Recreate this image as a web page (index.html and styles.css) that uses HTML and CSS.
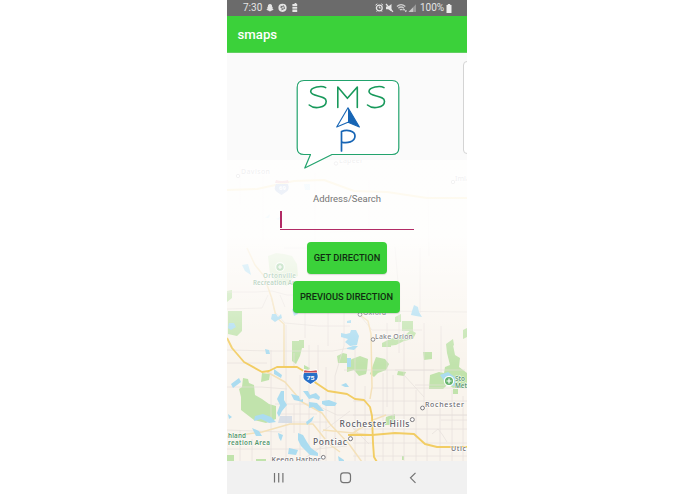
FILE: index.html
```html
<!DOCTYPE html>
<html lang="en">
<head>
<meta charset="utf-8">
<title>smaps</title>
<link rel="stylesheet" href="styles.css">
</head>
<body>
<div class="phone">
  <header class="status">
    <span class="time">7:30</span>
    <svg class="status-left" width="34" height="10" viewBox="0 0 34 10">
      <path fill="#e6e6e6" d="M4 1c1.500 0 2.200 1 2.100 2.700l.9.5-.8.8 1.400 1.800-1.700.6L4 8.600l-1.900-1.200-1.700-.6L1.800 5 1 4.200l.9-.5C1.800 2 2.500 1 4 1z"/>
      <circle cx="16.500" cy="4.800" r="4.100" fill="#e6e6e6"/>
      <path fill="none" stroke="#6b6b6b" stroke-width=".9" d="M14.300 4.300l3.400-1.500M15.400 6.800l3.400-1.500M15.100 2.800l1.300 3.500M17.600 2.700l.9 2.700"/>
      <path fill="#e6e6e6" d="M27.800 1h.8V0h1.800v1h.8v2.300h-4.800V1zM26.400 4h4.800v1.800h-4.800zM26.400 6.400h4.800V9h-4.800z"/>
    </svg>
    <svg class="status-right" width="42" height="10" viewBox="0 0 42 10">
      <g fill="none" stroke="#e6e6e6">
        <circle cx="4.300" cy="5" r="2.900" stroke-width="1.300"/>
        <path d="M.5 2.200L2.300.8M6.300.8l1.800 1.400M4.300 3.400V5h1.400M1.600 8.600l.9-.9M7 8.600l-.9-.9"/>
        <path d="M11 1l7 7.800" stroke-width="1.200"/>
        <path d="M22 3.400q4-3.600 8.300 0M23.400 5.200q2.700-2.400 5.500 0M24.900 6.900q1.300-1.100 2.600 0" stroke-width="1.300" stroke="#d0d0d0"/>
      </g>
      <path fill="#e6e6e6" d="M11 3.500h2.300L16.500 1v7.600l-3.200-2.400H11zM29 5.500l1.300 1.700h-2.600zM30.800 9.200l-1.300-1.700h2.600z"/>
      <path fill="#999" d="M33.500 9L41 1.300V9z"/><path fill="#c5c5c5" d="M33.500 9L38 4.400V9z"/>
    </svg>
    <span class="percent">100%</span>
    <svg class="battery" width="6" height="9" viewBox="0 0 6 9"><path fill="#eee" d="M1.800 0h2.400v1H5.500v8H.5V1h1.300z"/></svg>
  </header>
  <div class="appbar">smaps</div>

  <main class="content">
    <svg class="map" viewBox="227 160 240 302" width="240" height="302">
      <defs>
        <linearGradient id="fade" gradientUnits="userSpaceOnUse" x1="0" y1="160" x2="0" y2="365">
          <stop offset="0" stop-color="#fff" stop-opacity=".9"/>
          <stop offset=".37" stop-color="#fff" stop-opacity=".9"/>
          <stop offset=".46" stop-color="#fff" stop-opacity=".72"/>
          <stop offset=".72" stop-color="#fff" stop-opacity=".36"/>
          <stop offset="1" stop-color="#fff" stop-opacity="0"/>
        </linearGradient>
      </defs>
      <rect x="227" y="160" width="240" height="302" fill="#f9f4ed"/>
      <g class="park">
        <path d="M227 291l5-1v8l-5 4zM228 311h14v20l-5 5-9-2z"/>
        <path opacity=".55" d="M268 256l8-3 8 1 8 2 5 8 1 12-5 2-6 8-10-3-7-9z"/>
        <path d="M292 346v-5h7v-1h5v8h-2l-2 8-4 8-4-3zM243 378l5 1 1 4 5 2 1 10 7 4 7 5 7 2v13l-10 4-12-3-13-10v-13l-2-8 3-2zM262 373l8 1-1 6-8 2zM304 365l6 3-2 3-4-1zM337 356l6-3 4 1v9l-9 0z"/>
        <path d="M402 321h11v10h-11zM382 343l8-4 7-2 8-2 6-5 5 3-3 6-9 2-8 4-9 1-5 1zM395 317l6-3v8h-6zM446 344l7-5 1 6-5 5 3 4-5-1zM463 330l4-2v9l-4 2z"/>
        <path d="M352 359l8-3 8 3-1 11-1 4-7 2-5-6-7 2v-10zM376 357l9 2 4 5-3 6-8 3-4 4-4-3 3-9zM382 345h9v2h-9zM398 371l8 1-2 4-7-1zM423 352h9v7l-8 1zM447 345h6l2 10 5 3-1 9 8 6v15h-14l-5-4-5 5h-14l1-14 9-3 5 1 1-6 5-2-3-12zM453 389h5v5h-5zM386 417l9-3v7l-6 4h-4zM256 459h10v3h-10z"/>
        <path d="M227 455h7v7h-7zM402 456h2v4h-2z"/>
      </g>
      <g class="roads">
        <path d="M227 292h29l16-1 15 4h58l31 16 91 1M227 309l35-1 6-13M271 298l4 14 10 11 33 3h32M305 307v31M328 307v39M271 350v112M286 325v137M300 375v87M344 312v34l-9 30v86M395 247l4 47v59M420 248v65M357 312l15 18h50M424 323v86M441 326v47M404 330v132M387 323v84M227 350l45 1h61l16-3M227 387h34l26 2M227 430l55 2M275 404h39l23 11h130M309 345v117M326 367v95M355 345v117M372 388h95M353 401h114M415 385h52M353 415h114M353 429h114M353 443h114M353 456h114M365 386v76M383 373v89M393 375v87M416 390v72M427 404v58M440 405v57M452 390v72M463 396v66M280 414h37M282 422h48M294 405v28M320 405v57M226 449h90l31-3M240 430v31M252 439v23"/>
        <path d="M404 375l20 22M395 370h70M344 370h90M227 363h40M294 353v14M318 345v30M345 420l24 24M322 432l28-21M305 458l31-21M432 434l6-5 4 5 5 8M441 420h26M263 176v64M315 173v68M369 180v49M428 190l1 66M240 166v38M330 232l40-1M284 248h60M280 295l5 12"/>
      </g>
      <path class="minor" d="M247 248l8 17 9 11 8 23 4 18 8 7v42M360 315l8 6 3 13 1 53-2 12M267 372l18 10 17 20 20 11 8 11 19 20 13 18M227 437l35-5 28-8 23 0 16 20 11 8M350 435l23-15 13-5M323 430l50 5"/>
      <path class="highway" d="M227 190l30-1 37-8 30-1 30 11 33 1 40 6h40"/>
      <path class="highway" d="M227 338l5 10 12 14 18 10 7-1 8-4 20 0 10 6 9 10 12 8 19 3 8 5 9 1 6 7 2 9 1 27 1 14 3 5 13 5 19 1"/>
      <path class="highway" d="M348 435l24 0 23-2 19 1 11 10 12 3h30"/>
      <g class="lake">
        <path d="M242 265l6-1 2 7 1 4-6-4zM272 314l4 0 2 3 3-3 1 4-4 2-3 2-4-3zM229 323h5l2 4-5 3-3-2zM265 349l4 1 1 4-4 0zM274 369l8 6-1 3-7-4zM235 381l4-3 2 4-8 6-2-4zM291 394l8 2 1 4 3-1v3l-9-2zM281 391h3v9l3 5-5 6-3 6-2-4 3-8-3-6zM255 416l8-2 8 3 5 5-7 1-8-4-7 2zM303 391l5 0 2 4 6-2 4 4-1 3-6-2-4 1zM309 402l8 1 7 8-5 0-6-4-4 1zM322 401l7-1 8 3-2 3-9 0-4-2zM306 422l8-6-2 5-5 4zM298 433l5 2 4 7 4 6 7 5v3l-8-1-9-9-3-6zM252 428l7 3 3 5-6 0zM289 448l9 2-2 5-8-1zM278 433l5 2-2 6-2-3z"/>
        <path d="M292 309l3-1 3 6-4 2zM412 311l2-6 4 2 1 5 3 5-6-1-5-1zM347 321l4-1v3l-4 0zM341 333l5 1 4-1 1-3 5 0 3 6-2 9-7 1-5-4 3-3-7-2zM347 348l6-2 5 0-4 4-7-1zM347 358h4v9h-4zM440 375l8-3 8 6-1 8-8-1zM228 414l4 3-3 2zM338 456l6 4v2h-5zM284 215l-5 5-3-1zM304 184h6v6h-5zM265 218l5-4-1 4zM341 385l5-2 3 4-4 0z"/>
      </g>
      <path fill="#d1d9e5" opacity=".8" d="M280 416h12v7h-14z"/>
      <g class="poi faint"><circle cx="280" cy="267" r="4.300"/><path d="M280 265v4M278 267h4"/></g>
      <g class="poi"><circle cx="449" cy="381" r="4.600"/><path d="M449 378.500v5M446.500 381h5"/></g>
      <g class="shield"><path fill="#fff" d="M304 369q7 2 13 0 4 9-1 12l-5.500 4-5.500-4q-5-4-1-12z"/><path fill="#286fc7" d="M304 373h13q2 6-2 8l-4.500 3-4.500-3q-4-3-2-8z"/><path fill="#c94c55" d="M304.500 370.200q6 1.500 12 0l.7 2.200h-13.400z"/><text x="306.500" y="380" textLength="8" lengthAdjust="spacingAndGlyphs">75</text></g>
      <g class="shield"><path fill="#507abf" d="M276 184h12q2 6-2 8l-4.500 3-4.500-3q-4-3-1-8z"/><path fill="#d45b65" d="M276 180q6 2 12 0l1 3h-14z"/><text x="279" y="190">69</text></g>
      <g class="place">
        <text x="241" y="174" textLength="29">Davison</text><text x="339" y="163" textLength="24">Lapeer</text><text x="455" y="181">Imla</text>
        <text x="363" y="314.500" textLength="23">Oxford</text>
        <text x="375" y="338.500" textLength="38">Lake Orion</text>
        <text x="425" y="407" textLength="39">Rochester</text>
        <text x="451" y="451" textLength="15">Utic</text>
        <text x="271.500" y="462" textLength="49">Keego Harbor</text>
      </g>
      <g class="place big"><text x="339.500" y="426.500" textLength="70">Rochester Hills</text><text x="313" y="445" textLength="34">Pontiac</text></g>
      <g class="green">
        <text class="faint" x="263" y="278" textLength="33">Ortonville</text><text class="faint" x="253" y="285" textLength="49">Recreation Area</text>
        <text x="228" y="438" textLength="18">hland</text><text x="228" y="445" textLength="42">reation Area</text>
        <text x="455" y="380.500">Sto</text><text x="455" y="387.500">Met</text>
      </g>
      <g class="dots"><circle cx="238" cy="176" r="1.700"/><circle cx="336" cy="163.500" r="1.700"/><circle cx="453" cy="182" r="1.700"/><circle cx="360" cy="314.500" r="1.900"/><circle cx="373" cy="339.500" r="1.800"/><circle cx="422.500" cy="408" r="1.900"/><circle cx="412.300" cy="419.600" r="2"/><circle cx="350.500" cy="438.700" r="2"/><circle cx="323.300" cy="457.300" r="1.900"/></g>
      <rect x="227" y="160" width="240" height="205" fill="url(#fade)"/>
    </svg>
    <div class="side-card"></div>
    <svg class="logo" viewBox="290 75 116 97" width="116" height="97" fill="none" stroke-linecap="round" stroke-linejoin="round">
      <path fill="#fff" stroke="#22a36d" stroke-width="1.200" d="M304 80.500h88q6.800 0 6.800 7V148q0 6.500-6.800 6.500h-60L304.800 168l5.700-13.500H304q-6.800 0-6.800-6.500V87.500q0-7 6.800-7z"/>
      <g stroke="#18995b" stroke-width="1.600">
        <path d="M325.700 87.600c-4-2.400-15-.6-15 4 0 5.800 15.500 3 15.500 9.600 0 6.800-12 8.200-17 3.800"/>
        <path d="M337.800 107.500V87l9.600 11.300L357.300 87v20.500"/>
        <path d="M384 87.600c-4-2.400-15-.6-15 4 0 5.800 15.500 3 15.500 9.600 0 6.800-12 8.200-17 3.800"/>
      </g>
      <path fill="#fff" stroke="#1765b5" stroke-width="1.100" d="M348 107.800L336.700 127l11.300-4.800 11.400 4.800z"/>
      <path fill="#1765b5" d="M348 107.800v14.400l11.400 4.800z"/>
      <path stroke="#1765b5" stroke-width="1.700" d="M341.500 151v-19.500c5-2 13.500-1.200 13.500 4.600 0 6-8 7.400-13.500 6"/>
    </svg>
    <label class="label" for="address">Address/Search</label>
    <div class="field" id="address"></div>
    <button class="btn get">GET DIRECTION</button>
    <button class="btn previous">PREVIOUS DIRECTION</button>
  </main>

  <nav class="nav">
    <svg width="240" height="33" viewBox="0 0 240 33" fill="none" stroke="#737373" stroke-width="1.200">
      <path d="M47.500 12v9.500M51.700 12v9.500M55.900 12v9.500"/>
      <rect x="113.700" y="11.800" width="9.800" height="9.800" rx="2.800"/>
      <path d="M188.500 11.800l-5 5 5 5"/>
    </svg>
  </nav>
</div>
</body>
</html>
```
FILE: styles.css
```css
* { box-sizing: border-box; }
body { margin: 0; background: #fff; font-family: Roboto, sans-serif; }
.phone { display: flex; flex-direction: column; width: 240px; height: 494px; margin-left: 227px; overflow: hidden; background: #fafafa; }
.status { display: flex; align-items: center; height: 16px; flex: none; padding: 0 15px 0 16px; background: #6b6b6b; color: #e4e4e4; font-size: 10px; line-height: 16px; }
.time { width: 20px; }
.status-left { margin-left: 3px; }
.status-right { margin-left: auto; margin-right: 3px; }
.percent { width: 24px; margin-right: 2px; white-space: nowrap; }
.appbar { height: 37px; flex: none; padding: 0 10.5px; background: #3bd13a; color: #fff; font-size: 13.2px; font-weight: 500; line-height: 38px; border-bottom: 1px solid #62cf62; }
.content { position: relative; display: flex; flex-direction: column; align-items: center; height: 408px; flex: none; overflow: hidden; }
.map { position: absolute; top: 107px; left: 0; }
.side-card { position: absolute; top: 8px; right: -6px; width: 10px; height: 93px; border: 1px solid #d4d4d4; border-radius: 4px; background: #fff; }
.logo { position: relative; flex: none; margin-top: 22px; margin-left: 2px; }
.label { position: relative; margin-top: 20px; color: #757575; font-size: 9.5px; line-height: 14px; }
.field { position: relative; flex: none; width: 134px; height: 20px; margin-top: 5px; }
.field::before { content: ""; display: block; width: 1.5px; height: 17px; background: #b22b65; }
.field::after { content: ""; display: block; height: 1.3px; margin-top: 1px; background: #b22b65; }
.btn { position: relative; flex: none; height: 32px; padding: 0; border: 0; border-radius: 4px; background: #3bd13a; color: #102c10; font: 500 9.3px/32px Roboto, sans-serif; white-space: nowrap; box-shadow: 0 1px 1px #0002; }
.get { width: 80px; margin-top: 10.5px; }
.previous { width: 107px; margin-top: 7px; margin-right: 1px; }
.nav { height: 33px; flex: none; background: #f1f1f1; }
.nav svg { display: block; }
.park { fill: #c1e3ac; }
.lake { fill: #abdcf0; }
.roads { fill: none; stroke: #e5deda; stroke-width: .65; }
.minor { fill: none; stroke: #f4e1b9; stroke-width: 1.5; stroke-linejoin: round; }
.highway { fill: none; stroke: #f2cd64; stroke-width: 1.9; stroke-linejoin: round; }
.place { font: 500 7px "Noto Sans", sans-serif; fill: #6d6b70; stroke: #fff; stroke-width: 1.2px; paint-order: stroke; }
.big { font-size: 8.5px; fill: #606066; }
.green { font: 600 6.3px "Noto Sans", sans-serif; fill: #55956a; stroke: #fff; stroke-width: .8px; paint-order: stroke; }
.dots { fill: #fff; stroke: #6d6b70; stroke-width: .9; }
.poi { fill: #65b36d; stroke: #fff; stroke-width: 1.2; }
.faint { opacity: .8; }
.shield text { fill: #fff; font: 700 6px Roboto, sans-serif; }
```
